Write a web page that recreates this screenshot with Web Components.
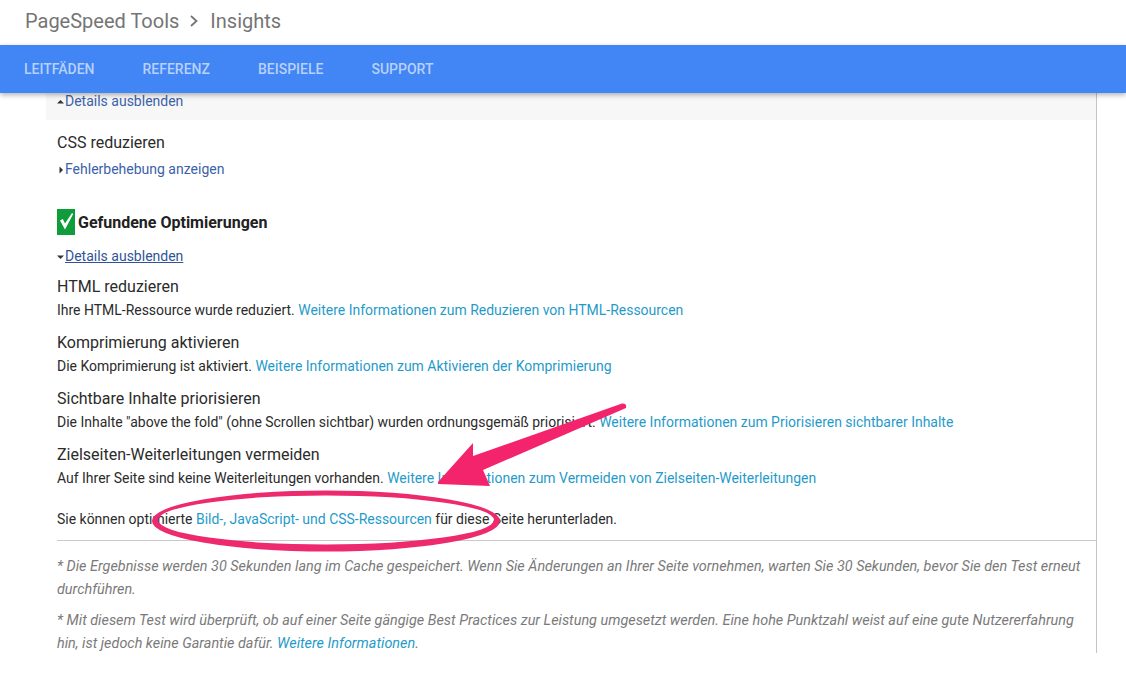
<!DOCTYPE html>
<html><head><meta charset="utf-8"><style>
html,body{margin:0;padding:0;background:#fff}
body{width:1126px;height:680px;overflow:hidden;font-family:Roboto,"Liberation Sans",sans-serif;position:relative}
</style></head><body>
<psi-app>
<psi-header slot="header"></psi-header>
<psi-nav slot="nav"><a>LEITFÄDEN</a><a>REFERENZ</a><a>BEISPIELE</a><a>SUPPORT</a></psi-nav>
<psi-content>
 <psi-panel><psi-toggle dir="up" color="#3b62a8">Details ausblenden</psi-toggle></psi-panel>
 <psi-rule-title style="margin-top:11px">CSS reduzieren</psi-rule-title>
 <psi-toggle dir="right" color="#3b62a8" style="margin-top:2px">Fehlerbehebung anzeigen</psi-toggle>
 <psi-section style="margin-top:28px">Gefundene Optimierungen</psi-section>
 <psi-toggle dir="down" color="#2f5597" underline style="margin-top:9px">Details ausblenden</psi-toggle>
 <psi-rule style="margin-top:7px" name="HTML reduzieren" text="Ihre HTML-Ressource wurde reduziert. " link="Weitere Informationen zum Reduzieren von HTML-Ressourcen"></psi-rule>
 <psi-rule name="Komprimierung aktivieren" text="Die Komprimierung ist aktiviert. " link="Weitere Informationen zum Aktivieren der Komprimierung"></psi-rule>
 <psi-rule name="Sichtbare Inhalte priorisieren" text='Die Inhalte "above the fold" (ohne Scrollen sichtbar) wurden ordnungsgemäß priorisiert. ' link="Weitere Informationen zum Priorisieren sichtbarer Inhalte"></psi-rule>
 <psi-rule name="Zielseiten-Weiterleitungen vermeiden" text="Auf Ihrer Seite sind keine Weiterleitungen vorhanden. " link="Weitere Informationen zum Vermeiden von Zielseiten-Weiterleitungen"></psi-rule>
 <psi-download></psi-download>
 <psi-notes></psi-notes>
</psi-content>
<psi-annotation></psi-annotation>
</psi-app>
<script>
function def(name,css,html){
  customElements.define(name,class extends HTMLElement{
    connectedCallback(){
      if(this.shadowRoot)return;
      const r=this.attachShadow({mode:'open'});
      r.innerHTML='<style>'+css+'</style>'+(typeof html==='function'?html(this):html);
    }
  });
}
const LINK='#1f9bc9';
def('psi-app',':host{display:block;width:1126px;height:680px;position:relative;overflow:hidden}','<slot name="header"></slot><slot name="nav"></slot><slot></slot>');
def('psi-header',':host{display:flex;align-items:center;height:45px;padding:0 0 3px 25px;box-sizing:border-box;color:#757575;font-size:20px;gap:11px;background:#fff}svg{display:block}',
 '<span style="margin-right:-1px">PageSpeed Tools</span><svg width="10" height="14" viewBox="0 0 10 14"><path d="M2 2l5.5 5L2 12" fill="none" stroke="#757575" stroke-width="1.8"/></svg><span>Insights</span>');
def('psi-nav',':host{display:flex;height:48px;align-items:center;padding-left:24px;gap:48px;background:#4285f4;box-shadow:0 2px 5px rgba(0,0,0,.3);position:relative;z-index:2}::slotted(a){color:#b7d1fa;font-size:14px;font-weight:500;letter-spacing:0}','<slot></slot>');
def('psi-content',':host{display:block;margin-left:46px;width:1050px;height:560px;border-right:1px solid #c4c4c4;position:relative}.p{padding:0 0 0 11px;width:1039px}','<div class="p"><slot></slot></div>');
def('psi-panel',':host{display:flow-root;margin-left:-11px;padding-left:11px;height:27px;background:#f7f7f7}::slotted(psi-toggle){margin-top:-4px}','<slot></slot>');
def('psi-toggle',':host{display:flex;align-items:center;font-size:14px;height:24px;line-height:24px}:host([underline]) span{text-decoration:underline}svg{display:block;flex:none}',
 t=>{const d=t.getAttribute('dir');const p=d==='up'?'M0 5.5L3.5 2L7 5.5z':d==='down'?'M0 2.5L7 2.5L3.5 6z':'M2.5 0.5L6 4L2.5 7.5z';
 return `<svg width="8" height="8" viewBox="0 0 8 8" style="margin:1px 0 0 0"><path d="${p}" fill="#333"/></svg><span style="color:${t.getAttribute('color')}"><slot></slot></span>`});
def('psi-rule-title',':host{display:block;font-size:16px;line-height:24px;color:#2b2b2b}','<slot></slot>');
def('psi-section',':host{display:flex;align-items:center;gap:3px;height:26px;font-size:16px;font-weight:700;color:#212121}svg{display:block}',
 '<svg width="18" height="26" viewBox="0 0 18 26"><rect width="18" height="26" fill="#0f9d3b"/><path d="M3 11.5L5.8 10L8 14.5L15 4L16.2 5L8 20.5z" fill="#fff"/></svg><span><slot></slot></span>');
def('psi-rule',':host{display:block;margin-bottom:9px;color:#2b2b2b}.n{font-size:16px;line-height:24px;margin-bottom:-1px}.d{font-size:13.98px;line-height:24px}a{color:'+LINK+'}',
 t=>`<div class="n">${t.getAttribute('name')}</div><div class="d">${t.getAttribute('text').replace(/"/g,'&quot;')}<a>${t.getAttribute('link')}</a></div>`);
def('psi-download',':host{display:block;margin-top:17px;font-size:13.98px;line-height:24px;color:#2b2b2b}a{color:'+LINK+'}',
 'Sie können optimierte <a>Bild-, JavaScript- und CSS-Ressourcen</a> für diese Seite herunterladen.');
def('psi-notes',':host{display:block;margin-top:9px;border-top:1px solid #c9c9c9;padding-top:14px;font-size:14.4px;line-height:23px;font-style:italic;color:#7a7a7a}p{margin:0 0 8px}a{color:'+LINK+'}',
 '<p>* Die Ergebnisse werden 30 Sekunden lang im Cache gespeichert. Wenn Sie Änderungen an Ihrer Seite vornehmen, warten Sie 30 Sekunden, bevor Sie den Test erneut durchführen.</p><p>* Mit diesem Test wird überprüft, ob auf einer Seite gängige Best Practices zur Leistung umgesetzt werden. Eine hohe Punktzahl weist auf eine gute Nutzererfahrung hin, ist jedoch keine Garantie dafür. <a>Weitere Informationen</a>.</p>');
def('psi-annotation',':host{position:absolute;left:0;top:0;width:1126px;height:680px;pointer-events:none;z-index:3}svg{display:block}',
 '<svg width="1126" height="680" viewBox="0 0 1126 680"><path d="M622 403.500L473 456L473 443L438 482L438 484L490 486L483 470L626 408Q627 403 622 403.500z" fill="#f4246c"/><path fill-rule="evenodd" d="M152 521a174 30.500 0 1 0 348 0a174 30.500 0 1 0 -348 0zM158 520a168 24.500 0 1 1 336 0a168 24.500 0 1 1 -336 0z" fill="#ee2a6e"/></svg>');
</script></body></html>
